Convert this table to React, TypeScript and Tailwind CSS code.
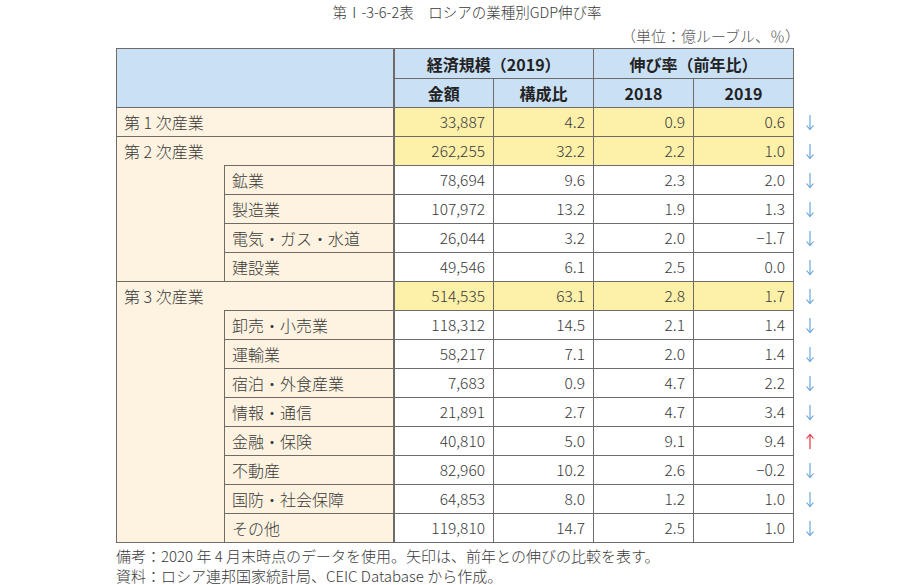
import React from "react";

type Row = {
  label: string;
  main?: boolean;
  v: [string, string, string, string];
  up?: boolean;
};

const groups: { main: Row; subs: Row[] }[] = [
  { main: { label: "第 1 次産業", main: true, v: ["33,887", "4.2", "0.9", "0.6"] }, subs: [] },
  {
    main: { label: "第 2 次産業", main: true, v: ["262,255", "32.2", "2.2", "1.0"] },
    subs: [
      { label: "鉱業", v: ["78,694", "9.6", "2.3", "2.0"] },
      { label: "製造業", v: ["107,972", "13.2", "1.9", "1.3"] },
      { label: "電気・ガス・水道", v: ["26,044", "3.2", "2.0", "−1.7"] },
      { label: "建設業", v: ["49,546", "6.1", "2.5", "0.0"] },
    ],
  },
  {
    main: { label: "第 3 次産業", main: true, v: ["514,535", "63.1", "2.8", "1.7"] },
    subs: [
      { label: "卸売・小売業", v: ["118,312", "14.5", "2.1", "1.4"] },
      { label: "運輸業", v: ["58,217", "7.1", "2.0", "1.4"] },
      { label: "宿泊・外食産業", v: ["7,683", "0.9", "4.7", "2.2"] },
      { label: "情報・通信", v: ["21,891", "2.7", "4.7", "3.4"] },
      { label: "金融・保険", v: ["40,810", "5.0", "9.1", "9.4"], up: true },
      { label: "不動産", v: ["82,960", "10.2", "2.6", "−0.2"] },
      { label: "国防・社会保障", v: ["64,853", "8.0", "1.2", "1.0"] },
      { label: "その他", v: ["119,810", "14.7", "2.5", "1.0"] },
    ],
  },
];

function Arrow({ up }: { up?: boolean }) {
  const c = up ? "#e5202e" : "#5b9fd9";
  return (
    <svg width="10" height="17" viewBox="0 0 10 17" className="block">
      {up ? (
        <>
          <line x1="5" y1="1.5" x2="5" y2="16" stroke={c} strokeWidth="1.1" />
          <polyline points="1.5,5.5 5,1.5 8.5,5.5" fill="none" stroke={c} strokeWidth="1.1" />
        </>
      ) : (
        <>
          <line x1="5" y1="1" x2="5" y2="15.5" stroke={c} strokeWidth="1.1" />
          <polyline points="1.5,11.5 5,15.5 8.5,11.5" fill="none" stroke={c} strokeWidth="1.1" />
        </>
      )}
    </svg>
  );
}

const B = "border border-[#6f6b69]";

function ValueCells({ r }: { r: Row }) {
  const bg = r.main ? "bg-[#fdf0a9]" : "bg-white";
  return (
    <>
      {r.v.map((x, i) => (
        <td key={i} className={`${B} ${bg} text-right pr-[8px] text-[15.5px] ${i === 0 ? "border-l-2" : ""}`}>
          {x}
        </td>
      ))}
      <td className="border-0 pl-[11px] align-middle">
        <Arrow up={r.up} />
      </td>
    </>
  );
}

export default function App() {
  return (
    <div
      className="w-[924px] h-[585px] bg-white text-[#3a3a3a] font-light relative overflow-hidden"
      style={{ fontFamily: '"Noto Sans CJK JP", "Noto Sans", sans-serif' }}
    >
      <div className="h-[24px] flex items-center justify-center pl-[10px] text-[14.5px] leading-none">
        第Ⅰ-3-6-2表　ロシアの業種別GDP伸び率
      </div>
      <div className="h-[22px] w-[800px] flex items-center justify-end text-[15px] text-[#555] leading-none">
        （単位：億ルーブル、％）
      </div>
      <table className="ml-[116px] mt-[2px] border-collapse text-[16px] leading-none table-fixed">
        <colgroup>
          <col className="w-[108px]" />
          <col className="w-[169px]" />
          <col className="w-[100px]" />
          <col className="w-[100px]" />
          <col className="w-[100px]" />
          <col className="w-[100px]" />
          <col className="w-[40px]" />
        </colgroup>
        <thead>
          <tr className="h-[30px] font-bold text-[#222]">
            <td colSpan={2} rowSpan={2} className={`${B} bg-[#cae0f5]`} />
            <td colSpan={2} className={`${B} border-l-2 bg-[#cae0f5] text-center`}>
              経済規模（2019）
            </td>
            <td colSpan={2} className={`${B} bg-[#cae0f5] text-center`}>
              伸び率（前年比）
            </td>
            <td className="border-0" />
          </tr>
          <tr className="h-[29px] font-bold text-[#222]">
            <td className={`${B} border-l-2 bg-[#cae0f5] text-center`}>金額</td>
            <td className={`${B} bg-[#cae0f5] text-center`}>構成比</td>
            <td className={`${B} bg-[#cae0f5] text-center`}>2018</td>
            <td className={`${B} bg-[#cae0f5] text-center`}>2019</td>
            <td className="border-0" />
          </tr>
        </thead>
        <tbody>
          {groups.map((g, gi) => (
            <React.Fragment key={gi}>
              <tr className="h-[29px]">
                <td
                  colSpan={2}
                  className={`${B} bg-[#fdf3e0] pl-[7px] ${g.subs.length ? "border-b-0" : ""}`}
                >
                  {g.main.label}
                </td>
                <ValueCells r={g.main} />
              </tr>
              {g.subs.map((s, si) => (
                <tr key={si} className="h-[29px]">
                  {si === 0 && (
                    <td rowSpan={g.subs.length} className={`${B} border-t-0 bg-[#fdf3e0]`} />
                  )}
                  <td className={`${B} bg-[#fdf3e0] pl-[7px]`}>{s.label}</td>
                  <ValueCells r={s} />
                </tr>
              ))}
            </React.Fragment>
          ))}
        </tbody>
      </table>
      <div className="ml-[116px] mt-[3px] text-[15px] leading-[20px]">
        <div>備考：2020 年 4 月末時点のデータを使用。矢印は、前年との伸びの比較を表す。</div>
        <div>資料：ロシア連邦国家統計局、CEIC Database から作成。</div>
      </div>
    </div>
  );
}
